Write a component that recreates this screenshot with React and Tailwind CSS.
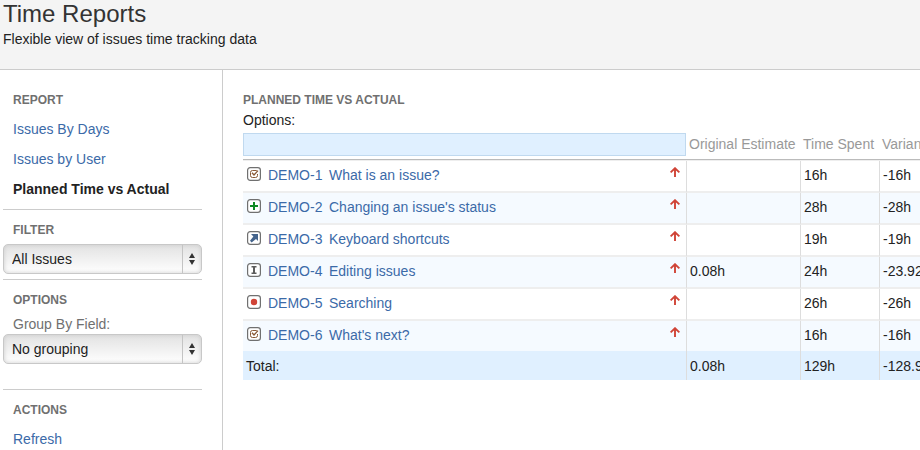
import React from "react";

const ISSUES = [
  { key: "DEMO-1", summary: "What is an issue?", type: "task", estimate: "", spent: "16h", variance: "-16h" },
  { key: "DEMO-2", summary: "Changing an issue's status", type: "feature", estimate: "", spent: "28h", variance: "-28h" },
  { key: "DEMO-3", summary: "Keyboard shortcuts", type: "improvement", estimate: "", spent: "19h", variance: "-19h" },
  { key: "DEMO-4", summary: "Editing issues", type: "text", estimate: "0.08h", spent: "24h", variance: "-23.92h" },
  { key: "DEMO-5", summary: "Searching", type: "bug", estimate: "", spent: "26h", variance: "-26h" },
  { key: "DEMO-6", summary: "What's next?", type: "task", estimate: "", spent: "16h", variance: "-16h" },
];

const GLYPHS = {
  task: (
    <g fill="none" stroke="#8a5a36" strokeWidth="1">
      <path d="M10 3.8Q9.6 3.5 9 3.5H5.5Q3.5 3.5 3.5 5.5v3q0 2 2 2h3q2 0 2-2V7" />
      <path d="M5 5.8l2 2.2 4-4.4" strokeWidth="1.3" />
    </g>
  ),
  feature: <path d="M6 3h2v3h3v2H8v3H6V8H3V6h3z" fill="#0f8a23" />,
  improvement: <path d="M4 3h7v7L9 8l-4.4 3.4L3 9.8 6.4 5.4z" fill="#44648c" />,
  text: <path d="M4.5 3h5v1.5H8v5h1.5V11h-5V9.5H6v-5H4.5z" fill="#5c5c5c" />,
  bug: <circle cx="7" cy="7" r="3.2" fill="#d04437" />,
};

function TypeIcon({ type }) {
  return (
    <svg width="14" height="14" viewBox="0 0 14 14" className="mb-[2px] shrink-0" aria-hidden="true">
      <rect x="0.6" y="0.6" width="12.8" height="12.8" rx="2.6" fill="#fff" stroke="#707070" strokeWidth="1.2" />
      {GLYPHS[type]}
    </svg>
  );
}

function PriorityArrow() {
  return (
    <svg width="10" height="10" viewBox="0 0 10 10" className="mb-[6px] ml-auto shrink-0" aria-label="Major">
      <path d="M5 10V1.5M0.6 5.4L5 1.2l4.4 4.2" fill="none" stroke="#d04437" strokeWidth="1.9" />
    </svg>
  );
}

function Heading({ children }) {
  return <h2 className="px-[10px] pt-[2px] text-xs/[28px] font-bold text-[#707070] uppercase">{children}</h2>;
}

function Picker({ id, options, ...rest }) {
  return (
    <div className="relative">
      <select
        id={id}
        {...rest}
        className="block h-[30px] w-full appearance-none rounded-[5px] border border-[#c8c8c8] bg-linear-to-b from-[#e2e2e2] to-white pr-6 pl-2 text-sm text-[#222] shadow-[inset_0_0_4px_#ccc]"
      >
        {options.map((o) => (
          <option key={o}>{o}</option>
        ))}
      </select>
      <span className="pointer-events-none absolute inset-y-px right-0 flex w-5 items-center border-l border-[#c4c4c4] pl-[6px]">
        <svg width="6" height="12" viewBox="0 0 6 12" aria-hidden="true">
          <path d="M3 0l3 5H0zM3 12l3-5H0z" fill="#333" />
        </svg>
      </span>
    </div>
  );
}

const LINK = "text-[#3b6aa8] hover:underline";

function Sidebar() {
  return (
    <aside className="w-[223px] shrink-0 border-r border-[#ccc] pt-[10px] pr-5 pl-[3px] text-sm">
      <section className="border-b border-[#ccc] pt-1 pb-[5px]">
        <Heading>Report</Heading>
        <ul className="px-[10px] leading-[30px]">
          <li><a href="#days" className={LINK}>Issues By Days</a></li>
          <li><a href="#user" className={LINK}>Issues by User</a></li>
          <li className="font-bold text-[#222]">Planned Time vs Actual</li>
        </ul>
      </section>
      <section className="border-b border-[#ccc] pt-1 pb-[5px]">
        <Heading>Filter</Heading>
        <Picker id="filter" aria-label="Filter" options={["All Issues"]} />
      </section>
      <section className="border-b border-[#ccc] pt-1 pb-[25px]">
        <Heading>Options</Heading>
        <label htmlFor="group" className="block px-[10px] leading-5 text-[#707070]">Group By Field:</label>
        <Picker id="group" options={["No grouping"]} />
      </section>
      <section className="pt-1">
        <Heading>Actions</Heading>
        <a href="#refresh" className={"block px-[10px] leading-[30px] " + LINK}>Refresh</a>
      </section>
    </aside>
  );
}

function ReportTable() {
  return (
    <table className="w-[720px] table-fixed border-separate border-spacing-0 text-left">
      <colgroup>
        <col className="w-[444px]" />
        <col className="w-[114px]" />
        <col className="w-[79px]" />
        <col />
      </colgroup>
      <thead>
        <tr className="font-normal text-[#999] *:border-b *:border-[#bbb] *:font-normal *:whitespace-nowrap">
          <th scope="col" aria-label="Issue" className="py-[3px] pr-px">
            <div className="h-[23px] border border-[#c0d9ef] bg-[#e0f0ff]" />
          </th>
          <th scope="col" className="pb-[2px] pl-[2px]">Original Estimate</th>
          <th scope="col" className="pb-[2px] pl-[2px]">Time Spent</th>
          <th scope="col" className="pb-[2px] pl-[2px]">Variance</th>
        </tr>
      </thead>
      <tbody>
        <tr aria-hidden="true" className="*:h-px *:bg-[#eee] *:p-0"><td colSpan={4} /></tr>
        {ISSUES.map((it) => (
          <tr
            key={it.key}
            className="*:h-8 *:border-r *:border-b-2 *:border-[#ddd] *:border-b-[#eee] *:pb-[2px] *:pl-[3px] last:*:h-[30px] last:*:border-b-0 even:bg-white odd:bg-[#f5faff]"
          >
            <td>
              <div className="flex items-center pr-[6px] pl-px">
                <TypeIcon type={it.type} />
                <a href={"#" + it.key} className="ml-[7px] w-[61px] text-[#3b6aa8] hover:underline">{it.key}</a>
                <a href={"#" + it.key} className="text-[#3b6aa8] hover:underline">{it.summary}</a>
                <PriorityArrow />
              </div>
            </td>
            <td>{it.estimate}</td>
            <td>{it.spent}</td>
            <td>{it.variance}</td>
          </tr>
        ))}
      </tbody>
      <tfoot>
        <tr className="bg-[#e0f0ff] *:h-[29px] *:border-r *:border-[#ddd] *:pl-[3px]">
          <td>Total:</td>
          <td>0.08h</td>
          <td>129h</td>
          <td>-128.92h</td>
        </tr>
      </tfoot>
    </table>
  );
}

export default function App() {
  return (
    <div className="flex min-h-screen flex-col bg-white font-['Liberation_Sans',Arial,sans-serif] text-sm text-[#222]">
      <header className="border-b border-[#ccc] bg-[#f4f4f4] px-[3px] pb-[18px]">
        <h1 className="text-2xl/[28px] text-[#333]">Time Reports</h1>
        <p className="leading-[23px]">Flexible view of issues time tracking data</p>
      </header>
      <div className="flex flex-1">
        <Sidebar />
        <main className="min-w-0 flex-1 overflow-hidden pt-5 pl-5">
          <h2 className="text-xs/[20px] font-bold text-[#707070] uppercase">Planned Time vs Actual</h2>
          <p className="leading-5">Options:</p>
          <ReportTable />
        </main>
      </div>
    </div>
  );
}
